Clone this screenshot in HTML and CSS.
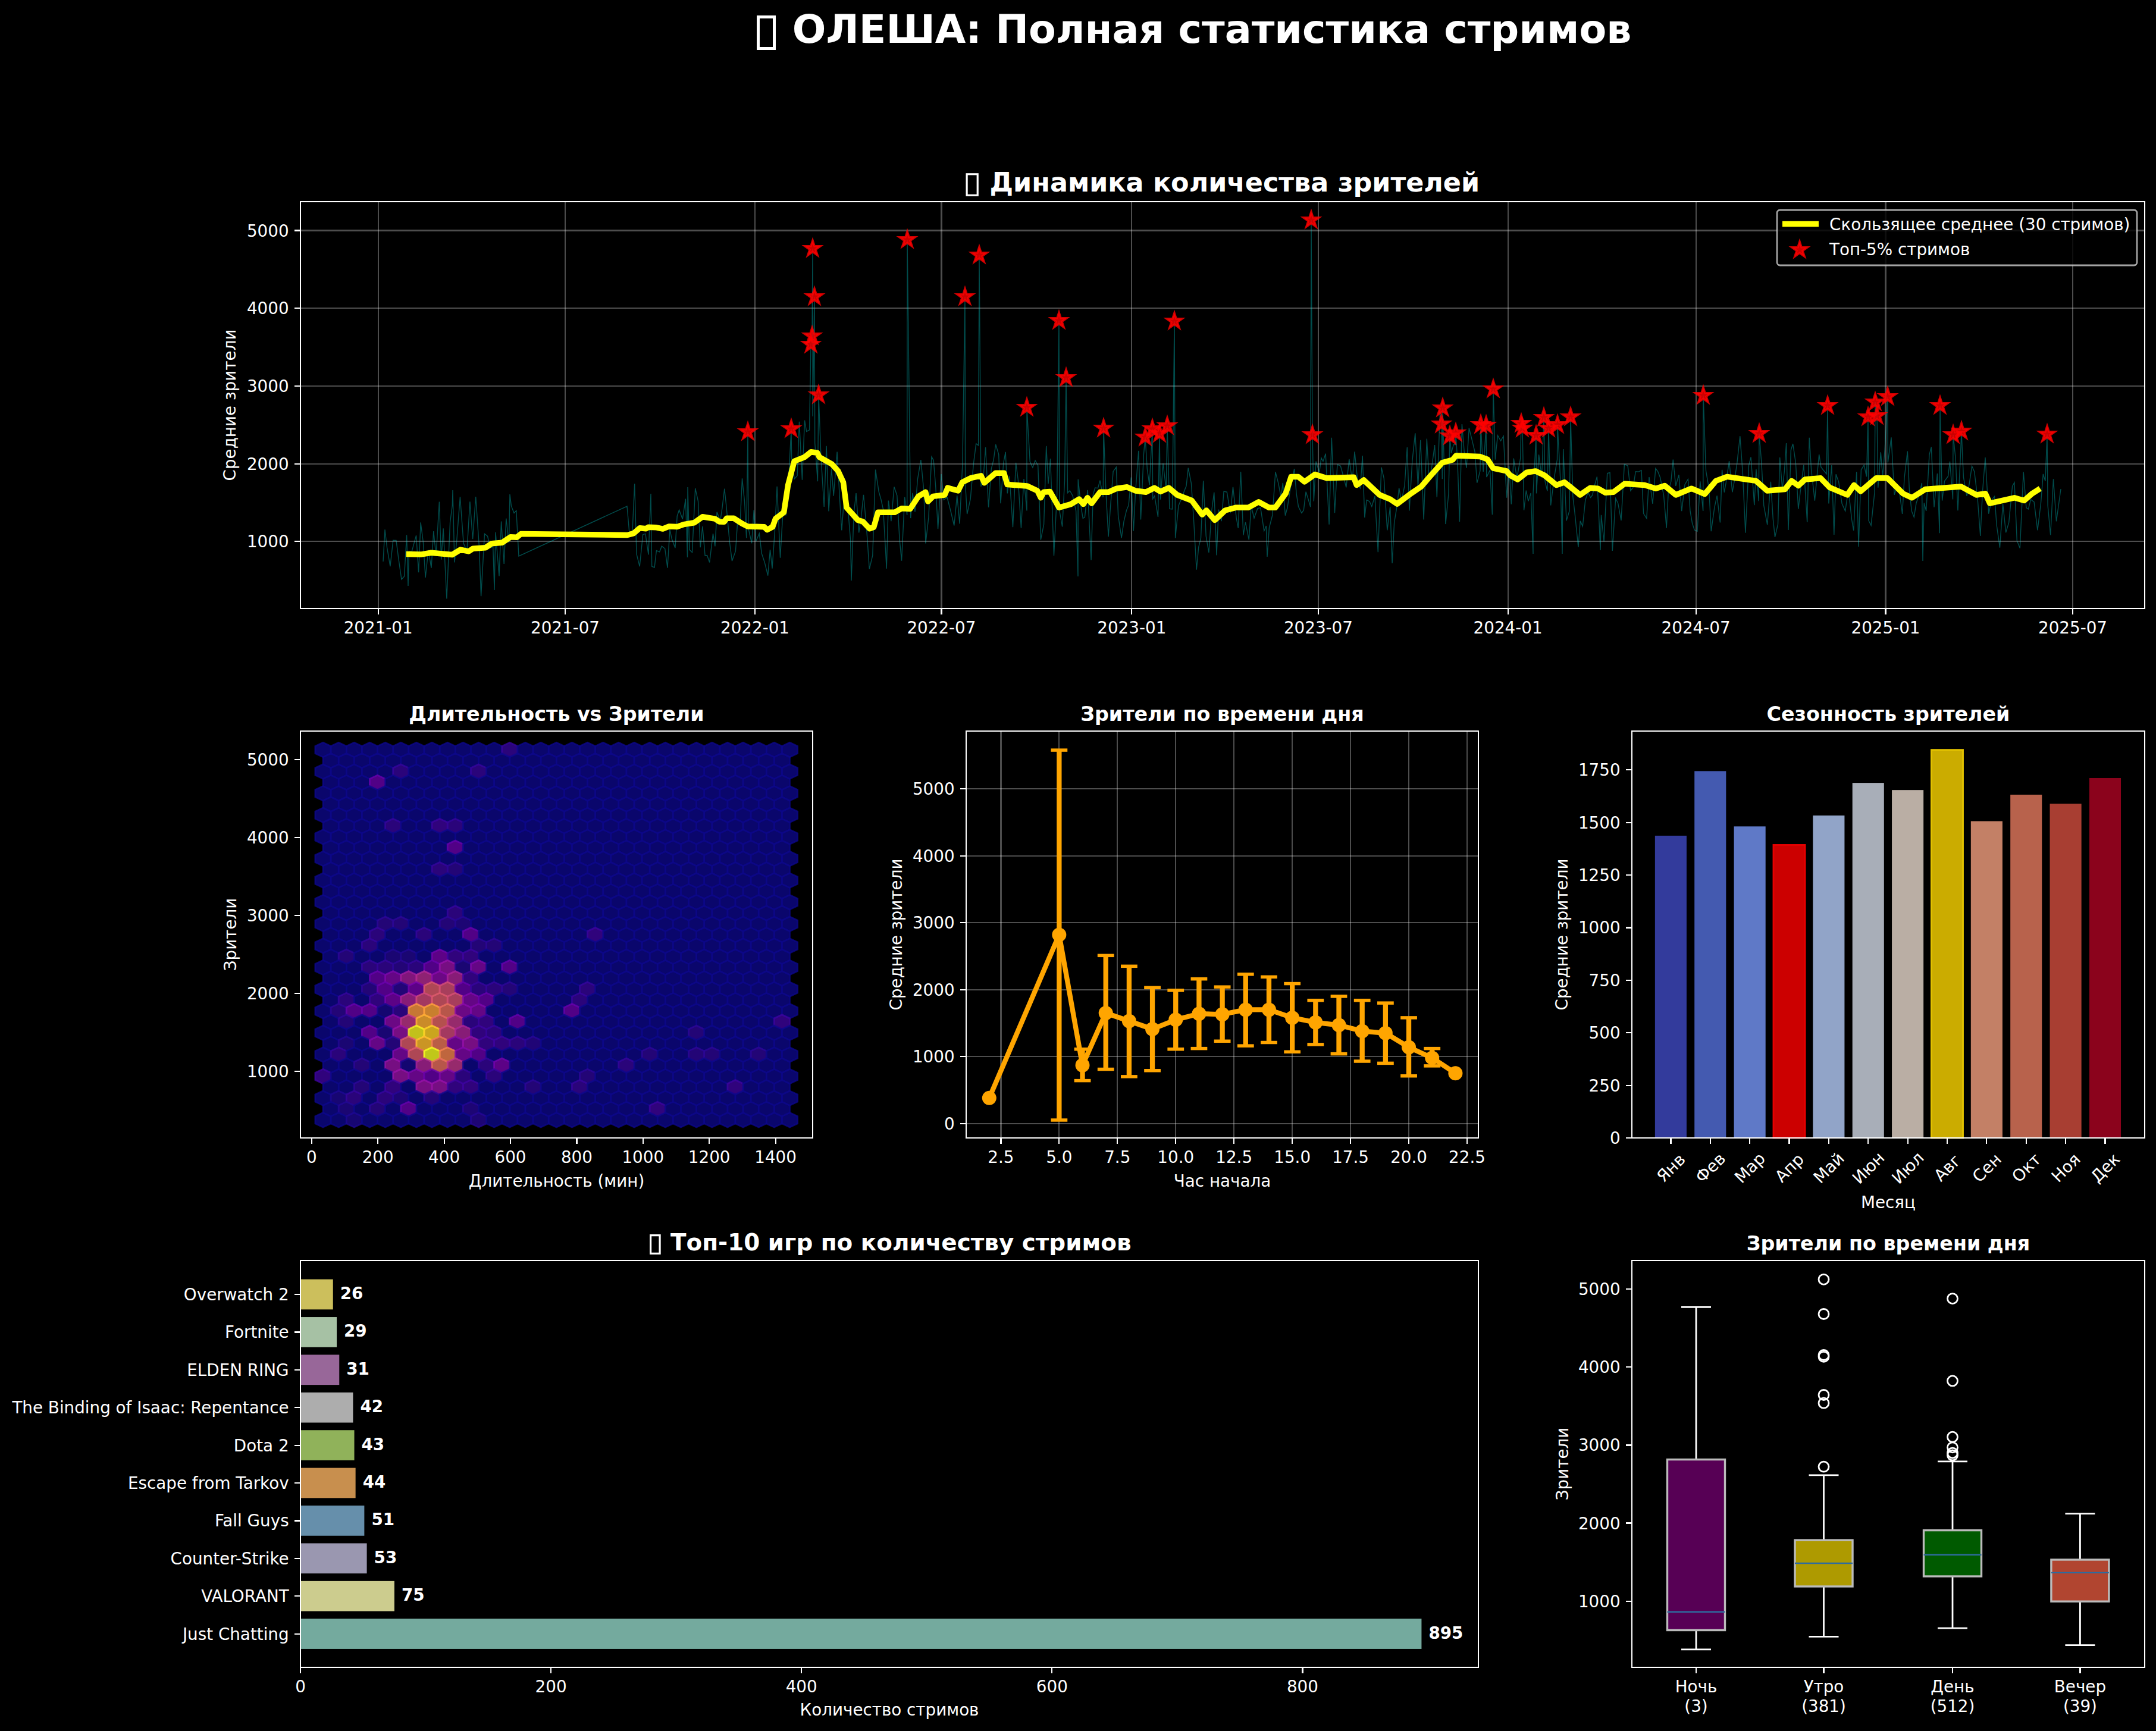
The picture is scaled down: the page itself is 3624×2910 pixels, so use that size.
FILE: index.html
```html
<!doctype html>
<html>
<head>
  <meta charset="utf-8">
  <link rel="stylesheet" href="styles.css">
</head>
<body>
  <h1 class="suptitle"><span class="tofu"></span> ОЛЕША: Полная статистика стримов</h1>

  <div class="dash">
    <div class="panel wide"><svg id="trend"></svg></div>
    <div class="panel"><svg id="hex"></svg></div>
    <div class="panel"><svg id="hours"></svg></div>
    <div class="panel"><svg id="season"></svg></div>
    <div class="panel double"><svg id="games"></svg></div>
    <div class="panel"><svg id="boxes"></svg></div>
  </div>

  <script src="charts.js"></script>
</body>
</html>
```

FILE: styles.css
```css
body{
  margin: 0;
  height: 2910px;
  overflow: hidden;
  background-color: #000;
  color: #fff;
  font-family: "DejaVu Sans", sans-serif;
}
.suptitle{
  margin: 9px 0 250px;
  padding-left: 390px;
  font-size: 66.67px;
  line-height: 80px;
  font-weight: bold;
  text-align: center;
}
.tofu{
  display: inline-block;
  box-sizing: border-box;
  width: 32px;
  height: 58px;
  margin-right: 5px;
  border: 5px solid #fff;
  vertical-align: -11.7px;
}
.dash{
  display: grid;
  grid-template-columns: 861px 861px 862px;
  grid-auto-rows: 684px;
  column-gap: 258px;
  row-gap: 206px;
  padding-left: 505px;
}
.wide{
  grid-column: 1 / -1;
}
.double{
  grid-column: span 2;
}
.panel svg{
  display: block;
  width: 100%;
  height: 100%;
  overflow: visible;
}
text{
  fill: #fff;
  font-family: "DejaVu Sans", sans-serif;
  font-size: 27.78px;
}
.title{
  font-size: 33.33px;
  font-weight: bold;
  text-anchor: middle;
}
.title-big{
  font-size: 44.44px;
  font-weight: bold;
}
.title-mid{
  font-size: 38.89px;
  font-weight: bold;
}
.tofu-box{
  fill: none;
  stroke: #fff;
  stroke-width: 3.2px;
}
.value{
  font-weight: bold;
}
.mid{
  text-anchor: middle;
}
.end{
  text-anchor: end;
}
.spine{
  fill: none;
  stroke: #fff;
  stroke-width: 2.2px;
  shape-rendering: crispEdges;
}
.tickmark{
  stroke: #fff;
  stroke-width: 2.2px;
  shape-rendering: crispEdges;
}
.grid{
  stroke: rgba(255,255,255,0.3);
  stroke-width: 2.2px;
  shape-rendering: crispEdges;
}
.raw{
  fill: none;
  stroke: rgba(0,255,255,0.3);
  stroke-width: 1.4px;
}
.smooth{
  fill: none;
  stroke: #ff0;
  stroke-width: 9.5px;
  stroke-linejoin: round;
}
.star{
  fill: rgba(255,0,0,0.8);
  stroke: rgba(255,0,0,0.8);
  stroke-width: 3.5px;
}
.legend{
  fill: rgba(0,0,0,0.8);
  stroke: rgba(204,204,204,0.8);
  stroke-width: 2.8px;
}
.legend-line{
  stroke: #ff0;
  stroke-width: 9.5px;
}
.orange-line{
  fill: none;
  stroke: #ffa500;
  stroke-width: 8.3px;
  stroke-linejoin: round;
}
.orange-err{
  stroke: #ffa500;
  stroke-width: 8.3px;
}
.orange-cap{
  stroke: #ffa500;
  stroke-width: 5.5px;
}
.orange-dot{
  fill: #ffa500;
}
.whisker{
  stroke: #fff;
  stroke-width: 2.8px;
}
.box{
  stroke: #bbb;
  stroke-width: 3.4px;
}
.median{
  stroke: #2e6b9e;
  stroke-width: 2.4px;
}
.flier{
  fill: none;
  stroke: #fff;
  stroke-width: 2.8px;
}
```

FILE: charts.js
```js
function line(x1, y1, x2, y2, cls){
  return "<line class='" + cls + "' x1='" + x1 + "' y1='" + y1 + "' x2='" + x2 + "' y2='" + y2 + "'></line>";
}

function label(x, y, str, cls){
  return "<text class='" + (cls || "") + "' x='" + x + "' y='" + y + "'>" + str + "</text>";
}

function leftLabel(x, y, str){
  return "<text class='mid' transform='translate(" + x + " " + y + ") rotate(-90)'>" + str + "</text>";
}

// the emoji never rendered in the chart, it shows as an empty box in front of the title
function tofuTitle(x, size, str, cls){
  var bw = size * 0.48, bh = size * 0.87;
  var m = "<rect class='tofu-box' x='" + (x + 1.6) + "' y='" + (-16.7 - size * 0.7 + 1.6) + "' width='" + (bw - 3.2) + "' height='" + (bh - 3.2) + "'></rect>";
  return m + label(x + size * 0.9, -16.7, str, cls);
}

function xTick(x, h, str, grid){
  var m = "";
  if(grid) m += line(x, 0, x, h, "grid");
  m += line(x, h, x, h + 9.7, "tickmark");
  if(str !== "") m += label(x, h + 42, str, "mid");
  return m;
}

function yTick(y, w, str, grid){
  var m = "";
  if(grid) m += line(0, y, w, y, "grid");
  m += line(-9.7, y, 0, y, "tickmark");
  m += label(-19.4, y + 10, str, "end");
  return m;
}

function spine(w, h){
  return "<rect class='spine' x='0' y='0' width='" + w + "' height='" + h + "'></rect>";
}

function starPath(cx, cy, r){
  var d = "";
  for(var i = 0; i < 10; i++){
    var rad = i % 2 == 0 ? r : r * 0.382;
    var a = -Math.PI / 2 + i * Math.PI / 5;
    d += (i == 0 ? "M" : "L") + (cx + rad * Math.cos(a)).toFixed(1) + " " + (cy + rad * Math.sin(a)).toFixed(1);
  }
  return "<path class='star' d='" + d + "Z'></path>";
}

function polyline(pts, cls){
  var s = [];
  for(var i = 0; i < pts.length; i++){
    s.push(pts[i][0].toFixed(1) + "," + pts[i][1].toFixed(1));
  }
  return "<polyline class='" + cls + "' points='" + s.join(" ") + "'></polyline>";
}

// points below were read off crops of the chart, so they come with the crop's offset and scale
function traced(ox, oy, sx, sy, pts){
  var out = [];
  for(var i = 0; i < pts.length; i += 2){
    out.push([ox + pts[i] / sx - 505, oy + pts[i + 1] / sy - 339]);
  }
  return out;
}

function drawTrend(){
  var w = 3100, h = 684;
  var m = "";

  var months = [["2021-01", 130.7], ["2021-07", 445], ["2022-01", 764], ["2022-07", 1077.4], ["2023-01", 1397.3],
    ["2023-07", 1710.9], ["2024-01", 2029.6], ["2024-07", 2345.6], ["2025-01", 2664.5], ["2025-07", 2979]];
  for(var i = 0; i < months.length; i++){
    m += xTick(months[i][1], h, months[i][0], true);
  }
  for(var v = 1; v <= 5; v++){
    m += yTick(48.5 + (5 - v) * 130.7, w, v * 1000, true);
  }

  var smooth = traced(360, 320, 1.4255, 2.119, [460,1296,495,1297,520,1291,570,1298,590,1280,610,1286,620,1276,650,1273,665,1258,690,1255,710,1235,725,1236,735,1224,990,1228,1005,1222,1020,1203,1035,1205,1040,1200,1060,1201,1075,1206,1090,1197,1110,1198,1125,1190,1150,1184,1170,1163,1200,1170,1210,1180,1222,1181,1228,1168,1245,1168,1265,1187,1278,1197,1318,1199,1325,1209,1338,1199,1345,1170,1365,1147,1375,1050,1390,965,1415,950,1430,932,1445,935,1450,950,1480,975,1495,1000])
    .concat(traced(1400, 320, 1.4255, 2.119, [25,1040,33,1130,60,1175,72,1180,88,1205,98,1200,108,1147,148,1147,165,1133,185,1135,205,1090,222,1075,228,1108,240,1090,268,1085,275,1060,300,1070,310,1040,330,1025,355,1017,363,1042,390,1007,410,1007,418,1048,465,1053,490,1070,498,1095,505,1075,520,1073,542,1130,570,1118,590,1100,600,1118,610,1095,620,1115,640,1075,660,1075,680,1062,705,1057,725,1070,750,1075,770,1060,785,1073,805,1060,825,1085,860,1105,885,1155,895,1140,915,1175,940,1140,965,1130,995,1130,1020,1110,1045,1130,1060,1130,1085,1080,1098,1020,1115,1020,1130,1038,1155,1012,1183,1025,1248,1022,1255,1050,1272,1032,1310,1085,1335,1100,1352,1117,1385,1080,1410,1055,1430,1020,1460,970,1485,960,1493,945,1550,948]))
    .concat(traced(2450, 320, 1.3356, 2.119, [67,958,80,990,110,1000,118,1015,135,1030,155,1005,175,1000,195,1015,222,1050,240,1040,262,1068,275,1085,298,1060,315,1062,332,1077,350,1075,375,1045,420,1050,445,1062,465,1052,490,1085,525,1062,555,1082,580,1035,605,1020,670,1035,695,1070,735,1065,750,1035,765,1052,780,1030,815,1025,835,1058,875,1085,890,1050,905,1072,940,1025,965,1025,1000,1080,1020,1095,1050,1065,1130,1055,1165,1085,1185,1080,1195,1115,1250,1095,1272,1105,1290,1080,1308,1062]));

  var stars = [[1257,726],[1330,721],[1366,418],[1369,499],[1365,565],[1363,579],[1376,664],[1525,403],[1622,499],[1646,429],[1726,685],[1780,539],[1792,635],[1855,720],[1925,735],[1937,721],[1949,729],[1962,716],[1974,540],[2204,370],[2206,731],[2425,686],[2423,713],[2437,733],[2447,728],[2489,714],[2498,715],[2510,654],[2557,712],[2559,720],[2582,732],[2595,702],[2603,720],[2618,714],[2640,701],[2863,665],[2957,729],[3072,682],[3140,701],[3152,676],[3155,699],[3173,667],[3261,682],[3283,731],[3297,725],[3441,730]];
  var dips = [[644,944],[686,985],[831,992],[761,824],[857,831],[872,935],[1054,851],[1431,976],[1812,969],[2130,936],[3232,943],[2626,931],[2577,931],[2690,925],[1094,830],[1156,819],[3464,822]];

  var fixed = stars.concat(dips);
  var raw = [];
  for(var i = 0; i < fixed.length; i++){
    raw.push([fixed[i][0] - 505, fixed[i][1] - 339]);
  }

  // everything else on the thin line is just scatter round the smooth line
  var seed = 7;
  function rnd(){
    seed = (seed * 16807) % 2147483647;
    return seed / 2147483647;
  }
  function smoothAt(x){
    if(x <= smooth[0][0]) return smooth[0][1];
    for(var i = 1; i < smooth.length; i++){
      if(x <= smooth[i][0]){
        var t = (x - smooth[i - 1][0]) / (smooth[i][0] - smooth[i - 1][0]);
        return smooth[i - 1][1] + t * (smooth[i][1] - smooth[i - 1][1]);
      }
    }
    return smooth[smooth.length - 1][1];
  }
  for(var x = 142; x < 2955; x += 3 + rnd() * 3){
    if(x > 364 && x < 553) continue;
    var off = (rnd() + rnd() + rnd() - 1.5) * 80;
    raw.push([x, smoothAt(x) + off + (x < 364 ? -18 : 4)]);
  }
  raw.sort(function(a, b){ return a[0] - b[0]; });

  m += polyline(raw, "raw");
  m += polyline(smooth, "smooth");
  for(var i = 0; i < stars.length; i++){
    m += starPath(stars[i][0] - 505, stars[i][1] - 339, 13.9);
  }

  m += "<rect class='legend' x='2482' y='14' width='605' height='93' rx='5'></rect>";
  m += line(2491, 37.6, 2552, 37.6, "legend-line");
  m += label(2570, 48, "Скользящее среднее (30 стримов)");
  m += starPath(2520, 81, 13.9);
  m += label(2570, 90, "Топ-5% стримов");

  m += spine(w, h);
  m += tofuTitle(1118.5, 44.44, "Динамика количества зрителей", "title-big");
  m += leftLabel(-109, h / 2, "Средние зрители");
  document.getElementById("trend").innerHTML = m;
}

var plasma = ["#0d0887","#41049d","#6a00a8","#8f0da4","#b12a90","#cc4778","#e16462","#f1844b","#fca636","#fcce25","#f0f921"];

function plasmaAt(v){
  var p = v * 10, i = Math.min(Math.floor(p), 9), t = p - i;
  var a = plasma[i], b = plasma[i + 1], out = [];
  for(var c = 0; c < 3; c++){
    var ca = parseInt(a.substr(1 + c * 2, 2), 16), cb = parseInt(b.substr(1 + c * 2, 2), 16);
    out.push(Math.round(ca + t * (cb - ca)));
  }
  return "rgb(" + out.join(",") + ")";
}

function drawHex(){
  var w = 861, h = 684;
  var m = "";

  // row: [col, value, col, value, ...]
  var hot = {
    0:[12,.1], 2:[5,.1,10,.1], 3:[3,.15], 7:[4,.1,7,.12,8,.1], 9:[8,.15], 11:[7,.1,8,.08], 15:[8,.1],
    16:[4,.08,5,.08,8,.08,9,.06], 17:[3,.1,6,.1,9,.15,17,.12], 18:[3,.1,10,.08,11,.08],
    19:[1,.08,4,.05,5,.05,7,.18,8,.12,9,.12],
    20:[3,.1,4,.1,5,.08,6,.1,7,.15,8,.25,9,.05,10,.2,12,.15],
    21:[3,.15,4,.2,5,.28,6,.32,7,.22,8,.3,9,.12],
    22:[3,.08,4,.15,5,.08,6,.18,7,.45,8,.42,9,.15,10,.1,11,.1,12,.08,17,.1],
    23:[1,.1,3,.12,4,.18,5,.3,6,.4,7,.45,8,.42,9,.2,10,.15,16,.1],
    24:[1,.08,2,.15,3,.15,4,.03,5,.1,6,.75,7,.78,8,.5,9,.22,10,.2,16,.15],
    25:[1,.08,4,.22,5,.35,6,.82,7,.6,8,.35,9,.1,10,.12,12,.15,29,.12],
    26:[3,.15,4,.05,5,.25,6,.98,7,.9,8,.4,9,.3,10,.12,11,.1,24,.08],
    27:[1,.05,3,.2,4,.08,5,.45,6,.85,7,.65,8,.2,9,.25,10,.12,11,.12,12,.1,13,.07],
    28:[1,.1,5,.2,6,.45,7,1,8,.55,9,.2,10,.15,21,.08,24,.08,25,.08,28,.08],
    29:[2,.08,4,.25,5,.03,6,.3,7,.5,8,.35,10,.1,11,.18,19,.1],
    30:[0,.12,5,.25,6,.2,7,.15,8,.2,9,.1,11,.1,17,.08],
    31:[2,.08,4,.12,6,.25,7,.25,8,.12,9,.12,13,.08,16,.1,26,.12],
    32:[1,.04,2,.1,4,.1,5,.06,7,.08],
    33:[1,.05,3,.08,5,.15,9,.06,21,.12],
    34:[2,.04,10,.06]
  };

  var hw = 13.07, r = 12.2;
  for(var row = 0; row < 35; row++){
    var odd = row % 2 == 1;
    var cols = odd ? 30 : 31;
    for(var c = 0; c < cols; c++){
      var cx = 38 + c * 26.15 + (odd ? 13.07 : 0);
      var cy = 31.5 + row * 18.3;
      var v = 0;
      var list = hot[row] || [];
      for(var i = 0; i < list.length; i += 2){
        if(list[i] == c) v = list[i + 1];
      }
      // dim cells were read a bit too bright, the middle ones a bit too dark
      if(v < 0.13) v = v * 0.75;
      else if(v < 0.6) v = v * 1.25;
      var col = plasmaAt(v);
      m += "<path fill='" + col + "' stroke='" + col + "' fill-opacity='0.8' stroke-opacity='0.8' stroke-width='2.8' d='M" + cx.toFixed(1) + " " + (cy - r).toFixed(1)
        + "l" + hw + " " + r / 2 + "v" + r + "l" + (-hw) + " " + r / 2 + "l" + (-hw) + " " + (-r / 2) + "v" + (-r) + "Z'></path>";
    }
  }

  for(var v = 0; v <= 1400; v += 200){
    m += xTick(18.8 + v * 0.557, h, v, false);
  }
  for(var v = 1; v <= 5; v++){
    m += yTick(48 + (5 - v) * 130.95, w, v * 1000, false);
  }
  m += spine(w, h);
  m += label(w / 2, -16.7, "Длительность vs Зрители", "title");
  m += label(w / 2, h + 82, "Длительность (мин)", "mid");
  m += leftLabel(-108, h / 2, "Зрители");
  document.getElementById("hex").innerHTML = m;
}

function drawHours(){
  var w = 861, h = 684;
  var m = "";
  function X(hr){ return 58.4 + (hr - 2.5) * 39.18; }
  function Y(v){ return 659.6 - v * 0.11246; }

  var ticks = ["2.5","5.0","7.5","10.0","12.5","15.0","17.5","20.0","22.5"];
  for(var i = 0; i < ticks.length; i++){
    m += xTick(X(parseFloat(ticks[i])), h, ticks[i], true);
  }
  for(var v = 0; v <= 5000; v += 1000){
    m += yTick(Y(v), w, v, true);
  }

  // hour, mean, low, high
  var data = [[2,380],[5,2820,50,5580],[6,870,640,1110],[7,1650,810,2510],[8,1530,700,2350],[9,1410,790,2030],
    [10,1550,1110,1990],[11,1640,1120,2160],[12,1630,1230,2040],[13,1700,1160,2230],[14,1700,1210,2190],
    [15,1580,1070,2090],[16,1510,1180,1840],[17,1470,1040,1900],[18,1380,930,1840],[19,1350,900,1800],
    [20,1140,710,1580],[21,980,860,1120],[22,750]];
  var pts = [];
  for(var i = 0; i < data.length; i++){
    var d = data[i], x = X(d[0]);
    pts.push([x, Y(d[1])]);
    if(d.length > 2){
      m += line(x, Y(d[2]), x, Y(d[3]), "orange-err");
      m += line(x - 13.9, Y(d[2]), x + 13.9, Y(d[2]), "orange-cap");
      m += line(x - 13.9, Y(d[3]), x + 13.9, Y(d[3]), "orange-cap");
    }
  }
  m += polyline(pts, "orange-line");
  for(var i = 0; i < pts.length; i++){
    m += "<circle class='orange-dot' cx='" + pts[i][0] + "' cy='" + pts[i][1] + "' r='12'></circle>";
  }

  m += spine(w, h);
  m += label(w / 2, -16.7, "Зрители по времени дня", "title");
  m += label(w / 2, h + 82, "Час начала", "mid");
  m += leftLabel(-108, h / 2, "Средние зрители");
  document.getElementById("hours").innerHTML = m;
}

function drawSeason(){
  var w = 862, h = 684;
  var m = "";
  var months = [["Янв",1437,"#333b9c"],["Фев",1744,"#445ab0"],["Мар",1481,"#5f79c7"],["Апр",1393,"#cc0000","#e60000"],
    ["Май",1533,"#91a4c8"],["Июн",1688,"#a8aeb8"],["Июл",1654,"#baaea4"],["Авг",1845,"#cbac00","#e3c200"],
    ["Сен",1506,"#c38066"],["Окт",1632,"#b8624c"],["Ноя",1589,"#a83e32"],["Дек",1711,"#8b031c"]];

  for(var i = 0; i < months.length; i++){
    var mo = months[i];
    var x = 65.4 + 66.37 * i;
    var bh = mo[1] * 0.3536;
    var edge = mo[3] ? " stroke='" + mo[3] + "' stroke-width='2.8'" : "";
    m += "<rect fill='" + mo[2] + "'" + edge + " x='" + (x - 26.55) + "' y='" + (h - bh) + "' width='53.1' height='" + bh + "'></rect>";
    m += line(x, h, x, h + 9.7, "tickmark");
    m += "<text class='mid' transform='translate(" + x + " " + (h + 50) + ") rotate(-45)' y='10'>" + mo[0] + "</text>";
  }
  for(var v = 0; v <= 1750; v += 250){
    m += yTick(h - v * 0.3536, w, v, false);
  }
  m += spine(w, h);
  m += label(w / 2, -16.7, "Сезонность зрителей", "title");
  m += label(w / 2, h + 118, "Месяц", "mid");
  m += leftLabel(-108, h / 2, "Средние зрители");
  document.getElementById("season").innerHTML = m;
}

function drawGames(){
  var w = 1980, h = 684;
  var m = "";
  var games = [["Overwatch 2",26,"#ccbf5c"],["Fortnite",29,"#a6c1a4"],["ELDEN RING",31,"#986799"],
    ["The Binding of Isaac: Repentance",42,"#adadad"],["Dota 2",43,"#90b25a"],["Escape from Tarkov",44,"#c88f4e"],
    ["Fall Guys",51,"#668fab"],["Counter-Strike",53,"#9a97b0"],["VALORANT",75,"#cccc8e"],["Just Chatting",895,"#74aa9e"]];

  for(var i = 0; i < games.length; i++){
    var g = games[i];
    var y = 57 + 63.4 * i;
    var bw = g[1] * 2.1055;
    m += "<rect fill='" + g[2] + "' x='0' y='" + (y - 25.35) + "' width='" + bw + "' height='50.7'></rect>";
    m += line(-9.7, y, 0, y, "tickmark");
    m += label(-19.4, y + 10, g[0], "end");
    m += label(bw + 12, y + 8, g[1], "value");
  }
  for(var v = 0; v <= 800; v += 200){
    m += xTick(v * 2.1055, h, v, false);
  }
  m += spine(w, h);
  m += tofuTitle(587, 38.89, "Топ-10 игр по количеству стримов", "title-mid");
  m += label(w / 2, h + 81, "Количество стримов", "mid");
  document.getElementById("games").innerHTML = m;
}

function drawBoxes(){
  var w = 862, h = 684;
  var m = "";
  var boxes = [
    {name:"Ночь", n:"(3)", x:108, fill:"#570055", q3:334.6, q1:621.5, med:590.8, top:78.4, bot:653.8, out:[]},
    {name:"Утро", n:"(381)", x:322.5, fill:"#ae9a00", q3:470.1, q1:548, med:509, top:360.9, bot:632.4, out:[31.8,90,159,161.8,226,239.7,346.7]},
    {name:"День", n:"(512)", x:539, fill:"#005a00", q3:453.6, q1:531, med:494.8, top:337.9, bot:618.2, out:[64.1,202.4,296.7,314.3,323.6,327.4]},
    {name:"Вечер", n:"(39)", x:753.4, fill:"#b14530", q3:503, q1:573.2, med:524.9, top:425.6, bot:646.7, out:[]}
  ];

  for(var i = 0; i < boxes.length; i++){
    var b = boxes[i];
    m += line(b.x, b.top, b.x, b.q3, "whisker");
    m += line(b.x, b.q1, b.x, b.bot, "whisker");
    m += line(b.x - 25, b.top, b.x + 25, b.top, "whisker");
    m += line(b.x - 25, b.bot, b.x + 25, b.bot, "whisker");
    m += "<rect class='box' fill='" + b.fill + "' x='" + (b.x - 48.5) + "' y='" + b.q3 + "' width='97' height='" + (b.q1 - b.q3) + "'></rect>";
    m += line(b.x - 48.5, b.med, b.x + 48.5, b.med, "median");
    for(var j = 0; j < b.out.length; j++){
      m += "<circle class='flier' cx='" + b.x + "' cy='" + b.out[j] + "' r='8.5'></circle>";
    }
    m += line(b.x, h, b.x, h + 9.7, "tickmark");
    m += label(b.x, h + 42, b.name, "mid");
    m += label(b.x, h + 75, b.n, "mid");
  }
  for(var v = 1; v <= 5; v++){
    m += yTick(48.2 + (5 - v) * 131.1, w, v * 1000, false);
  }
  m += spine(w, h);
  m += label(w / 2, -16.7, "Зрители по времени дня", "title");
  m += leftLabel(-107, h / 2, "Зрители");
  document.getElementById("boxes").innerHTML = m;
}

drawTrend();
drawHex();
drawHours();
drawSeason();
drawGames();
drawBoxes();
```
